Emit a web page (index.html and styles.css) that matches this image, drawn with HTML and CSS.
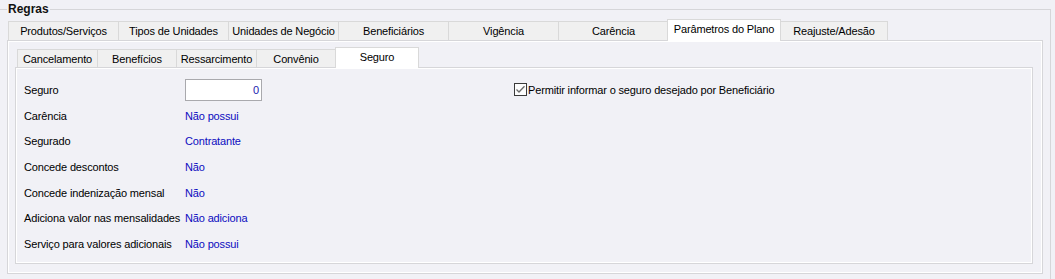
FILE: index.html
```html
<!DOCTYPE html>
<html lang="pt-BR">
<head>
<meta charset="utf-8">
<title>Regras</title>
<link rel="stylesheet" href="styles.css">
</head>
<body>
<div class="group">
  <div class="legend">Regras</div>
  <div class="tabs outer-tabs">
    <div class="tab">Produtos/Serviços</div>
    <div class="tab">Tipos de Unidades</div>
    <div class="tab">Unidades de Negócio</div>
    <div class="tab">Beneficiários</div>
    <div class="tab">Vigência</div>
    <div class="tab">Carência</div>
    <div class="tab active">Parâmetros do Plano</div>
    <div class="tab last">Reajuste/Adesão</div>
  </div>
  <div class="pane outer-pane">
    <div class="tabs inner-tabs">
      <div class="tab">Cancelamento</div>
      <div class="tab">Benefícios</div>
      <div class="tab">Ressarcimento</div>
      <div class="tab">Convênio</div>
      <div class="tab active">Seguro</div>
    </div>
    <div class="pane inner-pane">
      <div class="form">
        <div class="fields">
          <div class="label">Seguro</div>
          <div class="value"><div class="input">0</div></div>
          <div class="label">Carência</div>
          <div class="value">Não possui</div>
          <div class="label">Segurado</div>
          <div class="value">Contratante</div>
          <div class="label">Concede descontos</div>
          <div class="value">Não</div>
          <div class="label">Concede indenização mensal</div>
          <div class="value">Não</div>
          <div class="label">Adiciona valor nas mensalidades</div>
          <div class="value">Não adiciona</div>
          <div class="label">Serviço para valores adicionais</div>
          <div class="value">Não possui</div>
        </div>
        <div class="check">
          <svg class="box" width="13" height="13" viewBox="0 0 13 13">
            <rect x="0.5" y="0.5" width="12" height="12" fill="#fdfdfd" stroke="#3a3a3a"/>
            <path d="M2.5 6.5 L5 9 L10.5 3.2" fill="none" stroke="#6a6a6a" stroke-width="1.3"/>
          </svg>
          <span>Permitir informar o seguro desejado por Beneficiário</span>
        </div>
      </div>
    </div>
  </div>
</div>
</body>
</html>
```

FILE: styles.css
```css
body {
  margin: 0;
  background: #f1f1f6;
  font-family: "Liberation Sans", Arial, sans-serif;
  font-size: 11px;
  letter-spacing: -0.15px;
  color: #000;
}

.group {
  margin-top: 9px;
  width: 1051px;
  height: 275px;
  box-sizing: border-box;
  border-top: 1px solid #d6d6d9;
  border-right: 1px solid #d6d6d9;
}

.legend {
  width: fit-content;
  height: 12px;
  line-height: 12px;
  margin: -7px 0 0 7px;
  padding: 0 1px;
  background: #f1f1f6;
  font-weight: bold;
  font-size: 12px;
  letter-spacing: 0;
  color: #111;
}

.tabs {
  display: flex;
  align-items: flex-end;
}

.tab {
  box-sizing: border-box;
  border: 1px solid #d9d9d9;
  border-bottom: none;
  margin-left: -1px;
  background: #f0f0f0;
  display: flex;
  align-items: center;
  justify-content: center;
  white-space: nowrap;
}

.tab.active {
  background: #fff;
  position: relative;
  z-index: 1;
  margin-bottom: -1px;
}

.outer-tabs {
  margin-top: 4px;
  padding-left: 9px;
  height: 21px;
}

.outer-tabs .tab {
  width: 111px;
  height: 19px;
}

.outer-tabs .tab.active {
  width: 114px;
  height: 22px;
  margin-left: -2px;
  padding-bottom: 3px;
}

.outer-tabs .tab.last {
  width: 108px;
}

.pane {
  box-sizing: border-box;
  border: 1px solid #d6d6d9;
  box-shadow: inset 1px 1px 0 #ffffff, inset -1px -1px 0 #ffffff;
}

.outer-pane {
  margin-left: 7px;
  width: 1036px;
  height: 234px;
}

.inner-tabs {
  margin-top: 6px;
  padding-left: 10px;
  height: 20px;
}

.inner-tabs .tab {
  width: 81px;
  height: 18px;
}

.inner-tabs .tab:nth-child(even) {
  width: 80px;
}

.inner-tabs .tab.active {
  width: 84px;
  height: 21px;
  padding-bottom: 2px;
}

.inner-pane {
  margin-left: 7px;
  width: 1018px;
  height: 197px;
  padding: 9.17px 0 0 8px;
}

.form {
  display: flex;
  align-items: flex-start;
}

.fields {
  display: grid;
  grid-template-columns: 161px 329px;
  grid-auto-rows: 25.67px;
  align-items: center;
}

.value {
  color: #0c0cc0;
}

.input {
  box-sizing: border-box;
  width: 77px;
  height: 22px;
  border: 1px solid #a9a9ad;
  background: #fff;
  text-align: right;
  padding-right: 2px;
  line-height: 20px;
  color: #1a1ab0;
}

.check {
  height: 25.67px;
  display: flex;
  align-items: center;
}

.check .box {
  display: block;
  flex: none;
  margin-right: 1px;
}
```
